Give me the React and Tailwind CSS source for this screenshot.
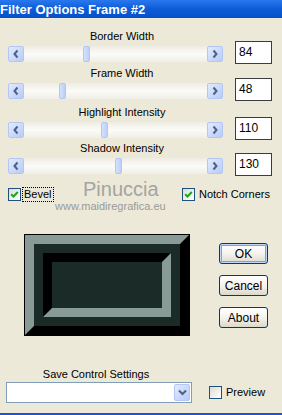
import React from "react";

const sliders = [
  { label: "Border Width", value: "84", thumb: 75, mt: "mt-0" },
  { label: "Frame Width", value: "48", thumb: 51, mt: "mt-[4px]" },
  { label: "Highlight Intensity", value: "110", thumb: 93, mt: "mt-[6px]" },
  { label: "Shadow Intensity", value: "130", thumb: 107, mt: "mt-[3px]" },
];

const Arrow = ({ dir }) => (
  <div className="flex h-[16px] w-[16px] items-center justify-center rounded-[2px] border border-[#b4c6f2] bg-gradient-to-br from-[#e2eafe] to-[#b8cbf8]">
    <svg width="10" height="10" viewBox="0 0 10 10">
      {dir === "left" ? (
        <path d="M6.5 1.5 L3.5 5 L6.5 8.5" stroke="#4d6185" strokeWidth="2" fill="none" />
      ) : (
        <path d="M3.5 1.5 L6.5 5 L3.5 8.5" stroke="#4d6185" strokeWidth="2" fill="none" />
      )}
    </svg>
  </div>
);

const ScrollBar = ({ thumb }) => (
  <div className="relative flex h-[16px] w-[215px] justify-between bg-gradient-to-b from-[#eeece3] via-[#fbfbf7] to-[#f0eee6]">
    <Arrow dir="left" />
    <Arrow dir="right" />
    <div
      className="absolute top-0 h-[16px] w-[7px] rounded-[2px] border border-[#b4c6f2] bg-gradient-to-r from-[#d5e1fd] to-[#bccffa]"
      style={{ left: thumb }}
    />
  </div>
);

const Check = ({ checked }) => (
  <span className="flex h-[13px] w-[13px] shrink-0 items-center justify-center border border-[#1c5180] bg-gradient-to-br from-[#dcdcd5] to-white">
    {checked && (
      <svg width="9" height="9" viewBox="0 0 9 9">
        <path d="M1.2 4.2 L3.5 6.5 L7.8 2" stroke="#21a121" strokeWidth="2" fill="none" />
      </svg>
    )}
  </span>
);

const XpButton = ({ children, primary }) => (
  <button
    className={
      primary
        ? "flex h-[21px] w-[49px] items-center justify-center rounded-[3px] border border-[#003c74] bg-gradient-to-b from-white via-[#f4f3ee] to-[#dcd8cc] text-[12px] leading-none text-black shadow-[inset_0_0_0_1px_#c2d6f7,inset_0_0_0_2px_#7f9fe4]"
        : "flex h-[21px] w-[49px] items-center justify-center rounded-[3px] border border-[#003c74] bg-gradient-to-b from-white via-[#f4f3ee] to-[#dcd8cc] text-[12px] leading-none text-black"
    }
  >
    {children}
  </button>
);

export default function App() {
  return (
    <div className="relative flex h-[415px] w-[282px] flex-col overflow-hidden bg-[#ece9d8] font-['Liberation_Sans',Arial,sans-serif] text-black">
      {/* title bar */}
      <div className="h-[18px] bg-gradient-to-b from-[#2a78ee] via-[#0b5cd7] to-[#0750c8] text-[13px] font-bold leading-[19px] text-white">
        Filter Options Frame #2
      </div>

      {/* sliders */}
      <div className="mt-[13px] flex flex-col">
        {sliders.map((s) => (
          <div key={s.label} className={`flex flex-col ${s.mt}`}>
            <div className="ml-[8px] h-[10px] w-[228px] text-center text-[11px] leading-[10px]">
              {s.label}
            </div>
            <div className="flex items-start">
              <div className="ml-[8px] mt-[5px]">
                <ScrollBar thumb={s.thumb} />
              </div>
              <div className="ml-[12px] h-[23px] w-[37px] border border-[#3c3c3c] bg-white pl-[3px] pt-[4px] text-[12px] leading-none">
                {s.value}
              </div>
            </div>
          </div>
        ))}
      </div>

      {/* check boxes */}
      <div className="mt-[12px] flex h-[13px] items-center">
        <div className="ml-[8px] flex w-[174px] items-center">
          <Check checked />
          <span className="ml-[1px] border border-dotted border-black px-[1px] text-[11px] leading-[13px]">
            Bevel
          </span>
        </div>
        <div className="flex items-center">
          <Check checked />
          <span className="ml-[4px] text-[11px] leading-[13px]">Notch Corners</span>
        </div>
      </div>

      {/* preview + buttons */}
      <div className="mt-[33px] flex items-start">
        <div className="ml-[24px] h-[102px] w-[166px] border border-black">
          <div className="h-full w-full border-[9px] border-b-black border-l-[#899b97] border-r-black border-t-[#899b97]">
            <div className="h-full w-full border-[9px] border-[#1b2b28]">
              <div className="h-full w-full border-[9px] border-b-[#899b97] border-l-black border-r-[#899b97] border-t-black bg-[#1b2b28]" />
            </div>
          </div>
        </div>
        <div className="ml-[29px] mt-[9px] flex flex-col gap-[11px]">
          <XpButton primary>OK</XpButton>
          <XpButton>Cancel</XpButton>
          <XpButton>About</XpButton>
        </div>
      </div>

      {/* save settings */}
      <div className="ml-[6px] mt-[33px] h-[10px] w-[180px] text-center text-[11px] leading-[10px]">
        Save Control Settings
      </div>
      <div className="mt-[3px] flex items-center">
        <div className="ml-[6px] flex h-[21px] w-[186px] justify-end border border-[#7f9db9] bg-white p-[1px]">
          <div className="flex h-full w-[16px] items-center justify-center rounded-[2px] border border-[#b4c6f2] bg-gradient-to-br from-[#e2eafe] to-[#b8cbf8]">
            <svg width="9" height="7" viewBox="0 0 9 7">
              <path d="M1 1.5 L4.5 5 L8 1.5" stroke="#4d6185" strokeWidth="2" fill="none" />
            </svg>
          </div>
        </div>
        <div className="ml-[17px] flex items-center">
          <Check />
          <span className="ml-[4px] text-[11px] leading-[13px]">Preview</span>
        </div>
      </div>

      <div className="mt-auto h-[2px] bg-[#1a54d6]" />

      {/* watermark */}
      <div className="absolute left-[83px] top-[179px] text-[20px] leading-[20px] text-[#a4a4a4]">
        Pinuccia
      </div>
      <div className="absolute left-[55px] top-[200px] text-[11px] leading-[12px] text-[#9a9a9a]">
        www.maidiregrafica.eu
      </div>
    </div>
  );
}
